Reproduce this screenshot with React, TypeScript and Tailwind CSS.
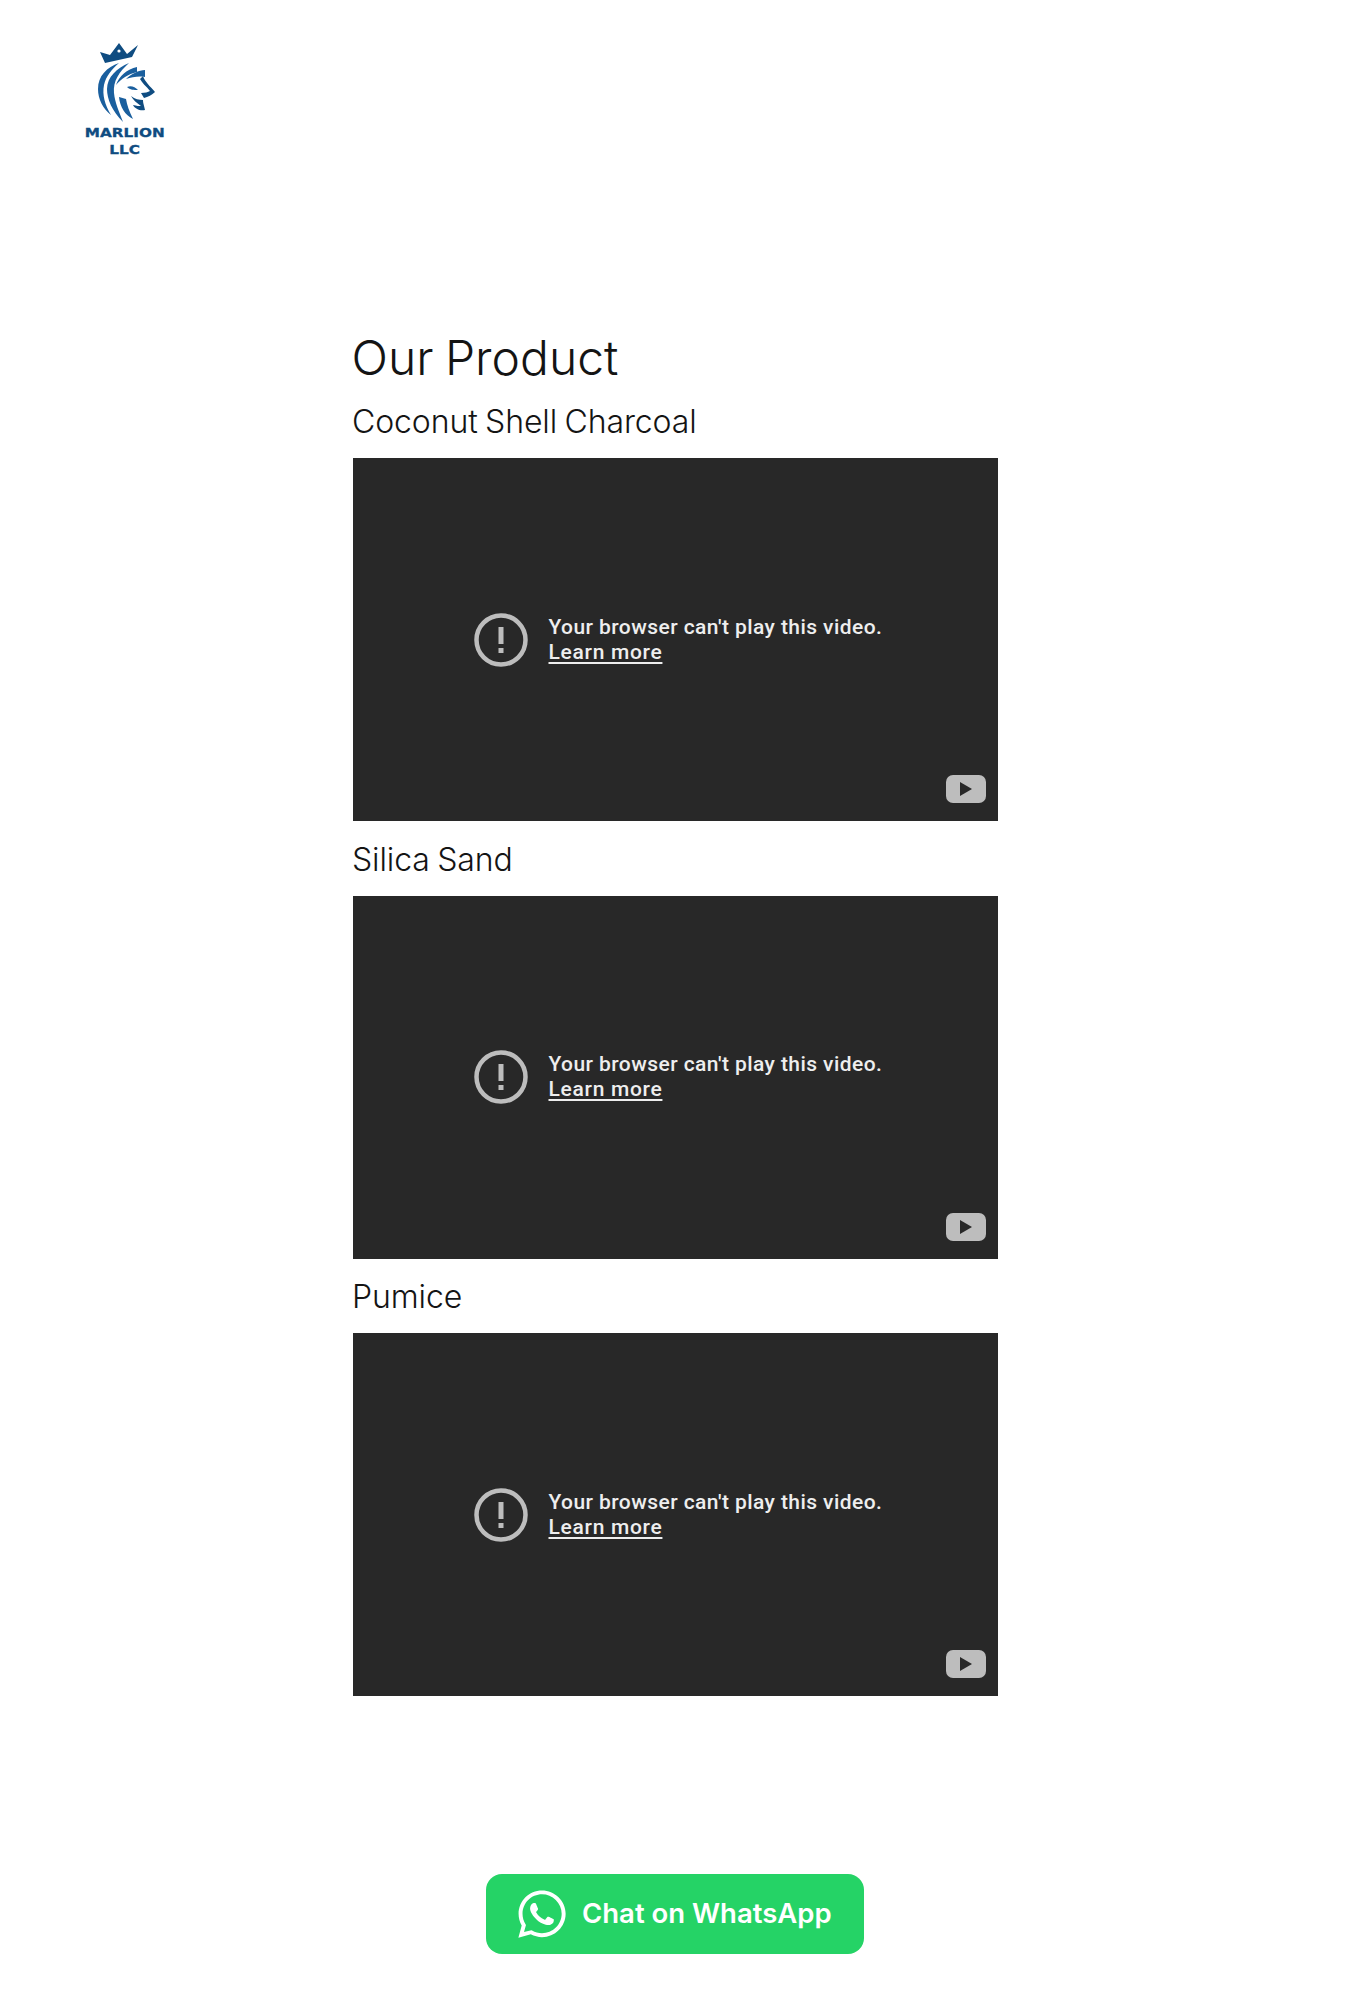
import React from 'react'
import { FaWhatsapp } from 'react-icons/fa'

const videos = ['Coconut Shell Charcoal', 'Silica Sand', 'Pumice']

// lion head + crown, hand drawn from the logo
const LionLogo = () => (
  <svg width="80" height="79" viewBox="0 0 80 79" className="block">
    <path d="M15 9 L25 12 L34 0 L42 11 L53 2 L47 14 L20 20 Z" fill="#0f4c81" />
    <circle cx="34" cy="8" r="1.6" fill="#fff" />
    <g fill="#1a5f9e">
      <path d="M34 20 C22 24 13 33 13 46 C13 56 18 66 26 72 C20 62 17 52 19 42 C21 33 27 26 34 20Z" />
      <path d="M44 20 C32 25 22 34 22 46 C22 56 27 68 38 79 C34 68 30 60 29 50 C28 38 34 29 44 20Z" />
      <path d="M52 24 C42 26 34 33 31 42 C36 36 43 31 52 29Z" />
      <path d="M60 27 C54 27 46 31 41 36 C47 34 54 33 60 34Z" />
      <path d="M34 54 C35 64 40 72 48 76 C44 68 42 62 41 56Z" />
      <path d="M42 44 C46 42 50 44 53 47 C49 47 45 47 42 44Z" />
    </g>
    <g fill="#0f4c81">
      <path d="M58 33 C60 39 65 43 70 49 C67 52 63 54 59 55 L56 50 C60 50 63 49 65 48 C61 43 57 40 55 36Z" />
      <path d="M46 53 C50 56 54 57 58 57 C58 60 59 62 60 67 C55 68 50 66 48 62 C52 63 54 63 56 63 C52 60 48 57 46 53Z" />
    </g>
  </svg>
)

const VideoError = () => (
  <div className="relative h-[363px] bg-[#282828] flex items-center pl-[121px]">
    <svg width="54" height="54" viewBox="0 0 54 54" className="shrink-0">
      <circle cx="27" cy="27" r="24.5" fill="none" stroke="#bdbdbd" strokeWidth="4.5" />
      <rect x="24.5" y="14" width="5" height="17" fill="#bdbdbd" />
      <rect x="24.5" y="35" width="5" height="5" fill="#bdbdbd" />
    </svg>
    <div className="ml-[21px] font-['Roboto',sans-serif] font-medium text-[21px] leading-[25px] tracking-[0.43px] text-[#eeeeee]">
      <p>Your browser can't play this video.</p>
      <a className="underline underline-offset-[3px] decoration-2 tracking-[0.7px]">Learn more</a>
    </div>
    <div className="absolute right-[12px] bottom-[18px] w-[40px] h-[28px] rounded-[7px] bg-[#bdbdbd] flex items-center justify-center">
      <svg width="12" height="14" viewBox="0 0 12 14">
        <path d="M0 0 L12 7 L0 14 Z" fill="#282828" />
      </svg>
    </div>
  </div>
)

export default function App() {
  return (
    <div className="bg-white h-[2004px] font-['Inter',sans-serif] text-[#141414]">
      <header className="h-[322px] pl-[85px] pt-[43px]">
        <div className="w-[80px] flex flex-col items-center">
          <LionLogo />
          <p className="mt-[3px] font-['DejaVu_Sans',sans-serif] font-bold text-[12.5px] leading-[16px] text-[#0f4c81] text-center scale-x-[1.22] whitespace-nowrap [-webkit-text-stroke:0.3px_#0f4c81]">
            MARLION
          </p>
          <p className="mt-[1px] font-['DejaVu_Sans',sans-serif] font-bold text-[12.5px] leading-[16px] text-[#0f4c81] text-center scale-x-[1.22] [-webkit-text-stroke:0.3px_#0f4c81]">
            LLC
          </p>
        </div>
      </header>

      <main className="w-[645px] mx-auto">
        <h1 className="-ml-[1px] text-[48px] leading-[72px] font-light [word-spacing:-2px]">Our Product</h1>
        <div className="pt-[4px] flex flex-col gap-[14.5px]">
          {videos.map((name) => (
            <section key={name}>
              <h2 className="-ml-[0.5px] text-[32px] leading-[48px] font-light tracking-[-0.1px] [word-spacing:-1.5px] mb-[12px]">{name}</h2>
              <VideoError />
            </section>
          ))}
        </div>
      </main>

      <div className="mt-[178px] flex justify-center">
        <a className="w-[378px] h-[80px] rounded-[16px] bg-[#25d366] text-white flex items-center pl-[29px]">
          <FaWhatsapp className="w-[54px] h-[54px]" />
          <span className="ml-[13px] text-[27.5px] font-semibold">Chat on WhatsApp</span>
        </a>
      </div>
    </div>
  )
}
